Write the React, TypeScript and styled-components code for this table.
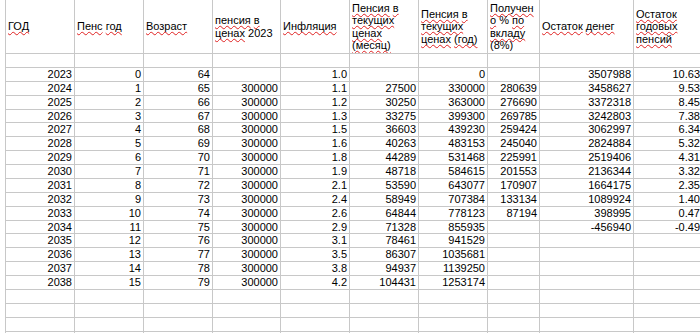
import styled, { createGlobalStyle } from 'styled-components';

const GlobalStyle = createGlobalStyle`
  html, body {
    margin: 0;
    padding: 0;
    background: #ffffff;
    overflow: hidden;
  }
  body {
    font-family: "Liberation Sans", Arial, sans-serif;
    font-size: 11px;
    color: #000000;
  }
`;

const Page = styled.div`
  width: 700px;
  height: 333px;
  overflow: hidden;
  padding-left: 5px;
  box-sizing: border-box;
`;

const Sheet = styled.div`
  display: grid;
  grid-template-columns: 69px 69px 69px 68px 69px 69px 69px 52px 94px 69px;
  grid-template-rows: 54px;
  grid-auto-rows: 13.882px;
  border-left: 1px solid #c8c8c8;
  width: max-content;
`;

const HeaderCell = styled.div`
  box-sizing: border-box;
  border-right: 1px solid #c8c8c8;
  border-bottom: 1px solid #c8c8c8;
  padding: 0 2px;
  display: flex;
  align-items: center;
  line-height: 12.4px;
  overflow-wrap: anywhere;
  overflow: hidden;
`;

const Cell = styled.div<{ $left?: boolean }>`
  box-sizing: border-box;
  border-right: 1px solid #c8c8c8;
  border-bottom: 1px solid #c8c8c8;
  padding: 0 2px;
  text-align: ${p => (p.$left ? 'left' : 'right')};
  line-height: 13px;
  white-space: nowrap;
  overflow: hidden;
`;

const Misspelled = styled.span`
  text-decoration: underline wavy #e02020;
  text-decoration-thickness: 1px;
  text-underline-offset: 1px;
  text-decoration-skip-ink: none;
`;

const headers = [
  'ГОД',
  'Пенс год',
  'Возраст',
  'пенсия в ценах 2023',
  'Инфляция',
  'Пенсия в текущих ценах (месяц)',
  'Пенсия в текущих ценах (год)',
  'Получено % по вкладу (8%)',
  'Остаток денег',
  'Остаток годовых пенсий',
];

type Row = string[];

const rows: Row[] = [
  ['', '', '', '', '', '', '', '', '', ''],
  ['2023', '0', '64', '', '1.0', '', '0', '', '3507988', '10.63'],
  ['2024', '1', '65', '300000', '1.1', '27500', '330000', '280639', '3458627', '9.53'],
  ['2025', '2', '66', '300000', '1.2', '30250', '363000', '276690', '3372318', '8.45'],
  ['2026', '3', '67', '300000', '1.3', '33275', '399300', '269785', '3242803', '7.38'],
  ['2027', '4', '68', '300000', '1.5', '36603', '439230', '259424', '3062997', '6.34'],
  ['2028', '5', '69', '300000', '1.6', '40263', '483153', '245040', '2824884', '5.32'],
  ['2029', '6', '70', '300000', '1.8', '44289', '531468', '225991', '2519406', '4.31'],
  ['2030', '7', '71', '300000', '1.9', '48718', '584615', '201553', '2136344', '3.32'],
  ['2031', '8', '72', '300000', '2.1', '53590', '643077', '170907', '1664175', '2.35'],
  ['2032', '9', '73', '300000', '2.4', '58949', '707384', '133134', '1089924', '1.40'],
  ['2033', '10', '74', '300000', '2.6', '64844', '778123', '87194', '398995', '0.47'],
  ['2034', '11', '75', '300000', '2.9', '71328', '855935', '', '-456940', '-0.49'],
  ['2035', '12', '76', '300000', '3.1', '78461', '941529', '', '', ''],
  ['2036', '13', '77', '300000', '3.5', '86307', '1035681', '', '', ''],
  ['2037', '14', '78', '300000', '3.8', '94937', '1139250', '', '', ''],
  ['2038', '15', '79', '300000', '4.2', '104431', '1253174', '', '', ''],
  ['', '', '', '', '', '', '', '', '', ''],
  ['', '', '', '', '', '', '', '', '', ''],
  ['', '', '', '', '', '', '', '', '', ''],
  ['', '', '', '', '', '', '', '', '', ''],
];

// cyrillic words get the spell-check squiggle, numbers and % don't
function Label({ text }: { text: string }) {
  const words = text.split(' ');
  return (
    <span>
      {words.map((w, i) => {
        const sep = i < words.length - 1 ? ' ' : '';
        return /[А-Яа-яЁё]/.test(w)
          ? <span key={i}><Misspelled>{w}</Misspelled>{sep}</span>
          : <span key={i}>{w}{sep}</span>;
      })}
    </span>
  );
}

function App() {
  return (
    <Page>
      <GlobalStyle />
      <Sheet>
        {headers.map(h => (
          <HeaderCell key={h}><Label text={h} /></HeaderCell>
        ))}
        {rows.map((r, ri) =>
          r.map((v, ci) => <Cell key={`${ri}-${ci}`}>{v}</Cell>)
        )}
      </Sheet>
    </Page>
  );
}

export default App;
